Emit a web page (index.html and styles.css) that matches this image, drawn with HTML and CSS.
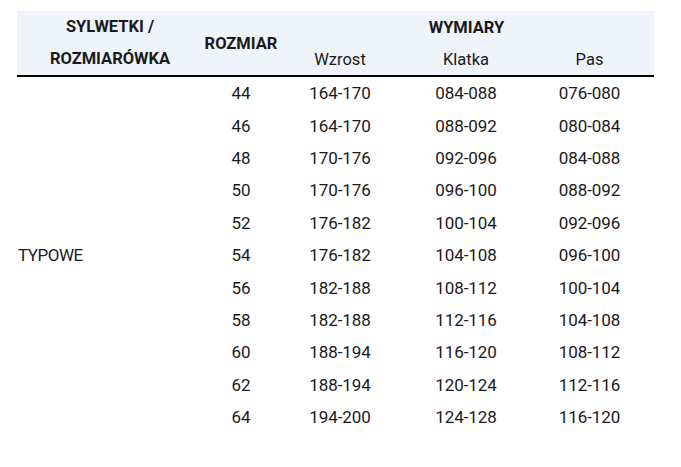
FILE: index.html
```html
<!DOCTYPE html>
<html lang="pl">
<head>
<meta charset="utf-8">
<title>Rozmiarówka</title>
<link rel="stylesheet" href="styles.css">
</head>
<body>
<table class="sizes">
  <colgroup>
    <col class="c1"><col class="c2"><col class="c3"><col class="c4"><col class="c5">
  </colgroup>
  <thead>
    <tr>
      <th rowspan="2" class="h-sil">SYLWETKI /<br>ROZMIARÓWKA</th>
      <th rowspan="2" class="h-roz">ROZMIAR</th>
      <th colspan="3" class="h-wym">WYMIARY</th>
    </tr>
    <tr class="sub">
      <th>Wzrost</th>
      <th>Klatka</th>
      <th class="last">Pas</th>
    </tr>
  </thead>
  <tbody>
    <tr><td rowspan="11" class="sil">TYPOWE</td><td>44</td><td>164-170</td><td>084-088</td><td class="last">076-080</td></tr>
    <tr><td>46</td><td>164-170</td><td>088-092</td><td class="last">080-084</td></tr>
    <tr><td>48</td><td>170-176</td><td>092-096</td><td class="last">084-088</td></tr>
    <tr><td>50</td><td>170-176</td><td>096-100</td><td class="last">088-092</td></tr>
    <tr><td>52</td><td>176-182</td><td>100-104</td><td class="last">092-096</td></tr>
    <tr><td>54</td><td>176-182</td><td>104-108</td><td class="last">096-100</td></tr>
    <tr><td>56</td><td>182-188</td><td>108-112</td><td class="last">100-104</td></tr>
    <tr><td>58</td><td>182-188</td><td>112-116</td><td class="last">104-108</td></tr>
    <tr><td>60</td><td>188-194</td><td>116-120</td><td class="last">108-112</td></tr>
    <tr><td>62</td><td>188-194</td><td>120-124</td><td class="last">112-116</td></tr>
    <tr><td>64</td><td>194-200</td><td>124-128</td><td class="last">116-120</td></tr>
  </tbody>
</table>
</body>
</html>
```
FILE: styles.css
```css
html, body {
  margin: 0;
  padding: 0;
  background: #ffffff;
}
body {
  padding: 11px 0 0 17px;
  font-family: Roboto, "Liberation Sans", sans-serif;
  color: #1a1a1a;
}
.sizes {
  border-collapse: collapse;
  table-layout: fixed;
  width: 637px;
  font-size: 17px;
}
.c1 { width: 186px; }
.c2 { width: 76px; }
.c3 { width: 122px; }
.c4 { width: 130px; }
.c5 { width: 123px; }
.sizes th, .sizes td {
  padding: 0;
  text-align: center;
  white-space: nowrap;
}
.sizes thead th {
  background: #eef4f9;
}
.sizes thead tr:first-child th {
  height: 32px;
}
.sizes thead tr.sub th {
  height: 32px;
  border-bottom: 2px solid #000;
  font-weight: 400;
  font-size: 16.5px;
  vertical-align: middle;
}
.h-sil, .h-roz, .h-wym {
  font-weight: 700;
  font-size: 16.5px;
}
.h-sil {
  line-height: 32px;
  border-bottom: 2px solid #000;
}
.h-roz {
  border-bottom: 2px solid #000;
}
.sizes tbody td {
  height: 32.4px;
  letter-spacing: -0.1px;
}
.sizes .last {
  padding-right: 6px;
}
.sizes td.sil {
  text-align: left;
  padding-left: 1px;
  letter-spacing: -0.5px;
}
```
